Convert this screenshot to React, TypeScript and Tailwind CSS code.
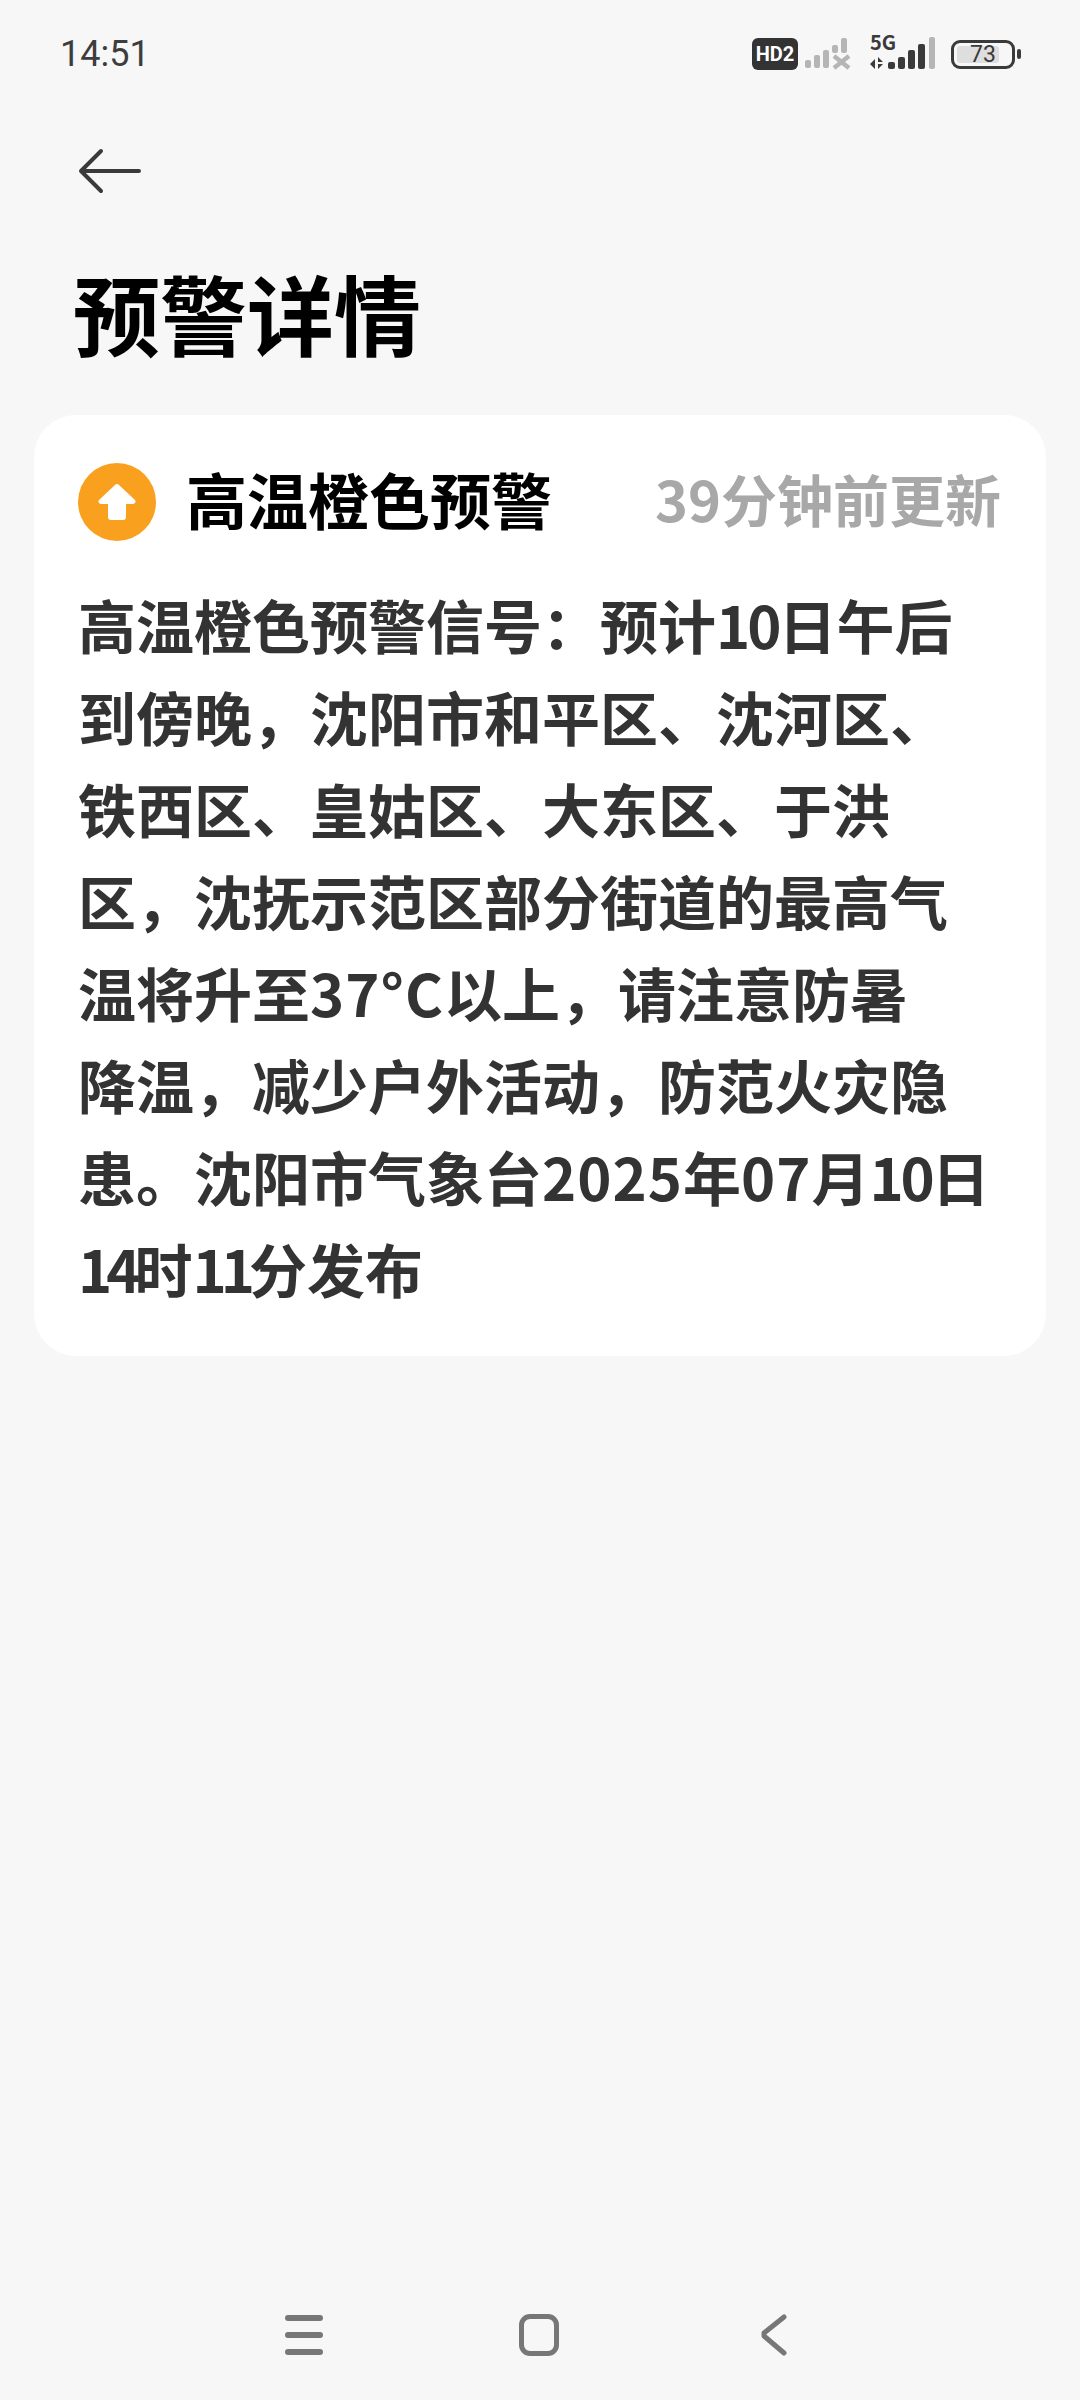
import { ReactNode } from "react";

// the digit runs are tightened or loosened by hand to fit the line widths in the picture
const lines: ReactNode[] = [
  <>高温橙色预警信号：预计<span className="tracking-[-3px]">10</span>日午后</>,
  "到傍晚，沈阳市和平区、沈河区、",
  "铁西区、皇姑区、大东区、于洪",
  "区，沈抚示范区部分街道的最高气",
  <>温将升至<span className="tracking-[1px]">37°C</span>以上，请注意防暑</>,
  "降温，减少户外活动，防范火灾隐",
  <>患。沈阳市气象台<span className="tracking-[1px]">2025</span>年<span className="tracking-[1px]">07</span>月<span className="tracking-[-3px]">10</span>日</>,
  <><span className="tracking-[-6px]">14</span>时<span className="tracking-[-6px]">11</span>分发布</>,
];

function WeakSignal() {
  return (
    <svg width="47" height="32" viewBox="0 0 47 32" fill="#b5b5b5">
      <rect x="0" y="22" width="6" height="8" rx="2" />
      <rect x="9" y="17" width="6" height="13" rx="2" />
      <rect x="18" y="12" width="6" height="18" rx="2" />
      <rect x="27" y="7" width="6" height="8" rx="2" />
      <rect x="36" y="0" width="6" height="15" rx="2" />
      <path d="M29 18l15 12M44 18L29 30" stroke="#b5b5b5" strokeWidth="4.5" fill="none" />
    </svg>
  );
}

function FiveGSignal() {
  return (
    <div className="relative w-[68px] h-[34px]">
      <span className="absolute left-[1px] top-[-5px] text-[20px] leading-[20px] font-bold text-[#3a3a3a]">5G</span>
      <svg className="absolute left-0 top-0" width="68" height="34" viewBox="0 0 68 34">
        <path d="M1 27l5-5v10zM9 20l5 5H9zM9 27h5l-5 5z" fill="#3a3a3a" />
        <rect x="19" y="25" width="7" height="7" rx="2" fill="#3a3a3a" />
        <rect x="29" y="20" width="7" height="12" rx="2" fill="#3a3a3a" />
        <rect x="39" y="13" width="7" height="19" rx="2" fill="#3a3a3a" />
        <rect x="49" y="7" width="7" height="25" rx="2" fill="#3a3a3a" />
        <rect x="60" y="0" width="6" height="32" rx="2" fill="#b5b5b5" />
      </svg>
    </div>
  );
}

function Battery() {
  return (
    <div className="flex items-center gap-[2px]">
      <div className="relative w-[64px] h-[29px] rounded-[9px] border-[3px] border-[#3a3a3a] p-[3px]">
        <div className="h-full w-[42px] rounded-[3px] bg-[#dedede]" />
        <span className="absolute inset-0 flex items-center justify-center text-[23px] leading-none text-[#3a3a3a]">73</span>
      </div>
      <div className="w-[4px] h-[10px] rounded-[2px] bg-[#3a3a3a]" />
    </div>
  );
}

export default function App() {
  return (
    <div className="w-[1080px] h-[2400px] flex flex-col bg-[#f7f7f7] font-['Noto_Sans_CJK_SC','Noto_Sans',sans-serif]">
      <div className="flex items-center justify-between h-[108px] pl-[60px] pr-[59px]">
        <span className="text-[36px] text-[#3d3d3d] font-['Roboto',sans-serif]">14:51</span>
        <div className="flex items-center">
          <span className="flex items-center justify-center w-[46px] h-[32px] rounded-[6px] bg-[#333] text-white text-[20px] font-bold font-['Roboto',sans-serif]">
            HD2
          </span>
          <div className="ml-[7px] mr-[17px]">
            <WeakSignal />
          </div>
          <FiveGSignal />
          <div className="ml-[14px] font-['Roboto',sans-serif]">
            <Battery />
          </div>
        </div>
      </div>

      <div className="pl-[78px] pt-[40px]">
        <svg width="64" height="46" viewBox="0 0 64 46" fill="none" stroke="#3a3a3a" strokeWidth="4" strokeLinecap="round" strokeLinejoin="round">
          <path d="M3 23h58M23 3L3 23l20 20" />
        </svg>
      </div>

      <h1 className="pl-[73px] mt-[58px] text-[87px] leading-[120px] font-bold text-black">预警详情</h1>

      <div className="mx-[34px] mt-[43px] rounded-[42px] bg-white pl-[44px] pr-[45px] pt-[47px] pb-[42px]">
        <div className="flex items-center h-[80px]">
          <div className="flex items-center justify-center w-[78px] h-[78px] rounded-full bg-[#f9a11f]">
            <svg width="42" height="42" viewBox="0 0 42 42" fill="white">
              <path d="M21 3a3 3 0 0 1 2 1l16 15a2.5 2.5 0 0 1-2 4h-7v13a3 3 0 0 1-3 3H15a3 3 0 0 1-3-3V23H5a2.5 2.5 0 0 1-2-4L19 4a3 3 0 0 1 2-1z" />
            </svg>
          </div>
          <span className="ml-[30px] mb-[8px] text-[61px] leading-none font-bold text-black">高温橙色预警</span>
          <span className="ml-auto mb-[8px] text-[56px] leading-none font-bold text-[#a8a8a8]">39分钟前更新</span>
        </div>
        <div className="mt-[36px] text-[58px] leading-[92px] font-bold text-[#333333]">
          {lines.map((line, i) => (
            <div key={i} className="whitespace-nowrap">
              {line}
            </div>
          ))}
        </div>
      </div>

      <div className="mt-auto mb-[44px] flex items-center pl-[285px]">
        <div className="flex flex-col gap-[11px]">
          <div className="w-[38px] h-[6px] rounded-full bg-[#777]" />
          <div className="w-[38px] h-[6px] rounded-full bg-[#777]" />
          <div className="w-[38px] h-[6px] rounded-full bg-[#777]" />
        </div>
        <div className="ml-[196px] w-[40px] h-[42px] rounded-[11px] border-[5px] border-[#777]" />
        <svg className="ml-[202px]" width="26" height="42" viewBox="0 0 26 42" fill="none" stroke="#777" strokeWidth="5" strokeLinecap="round" strokeLinejoin="round">
          <path d="M23 3L3 19v3l20 17" />
        </svg>
      </div>
    </div>
  );
}
